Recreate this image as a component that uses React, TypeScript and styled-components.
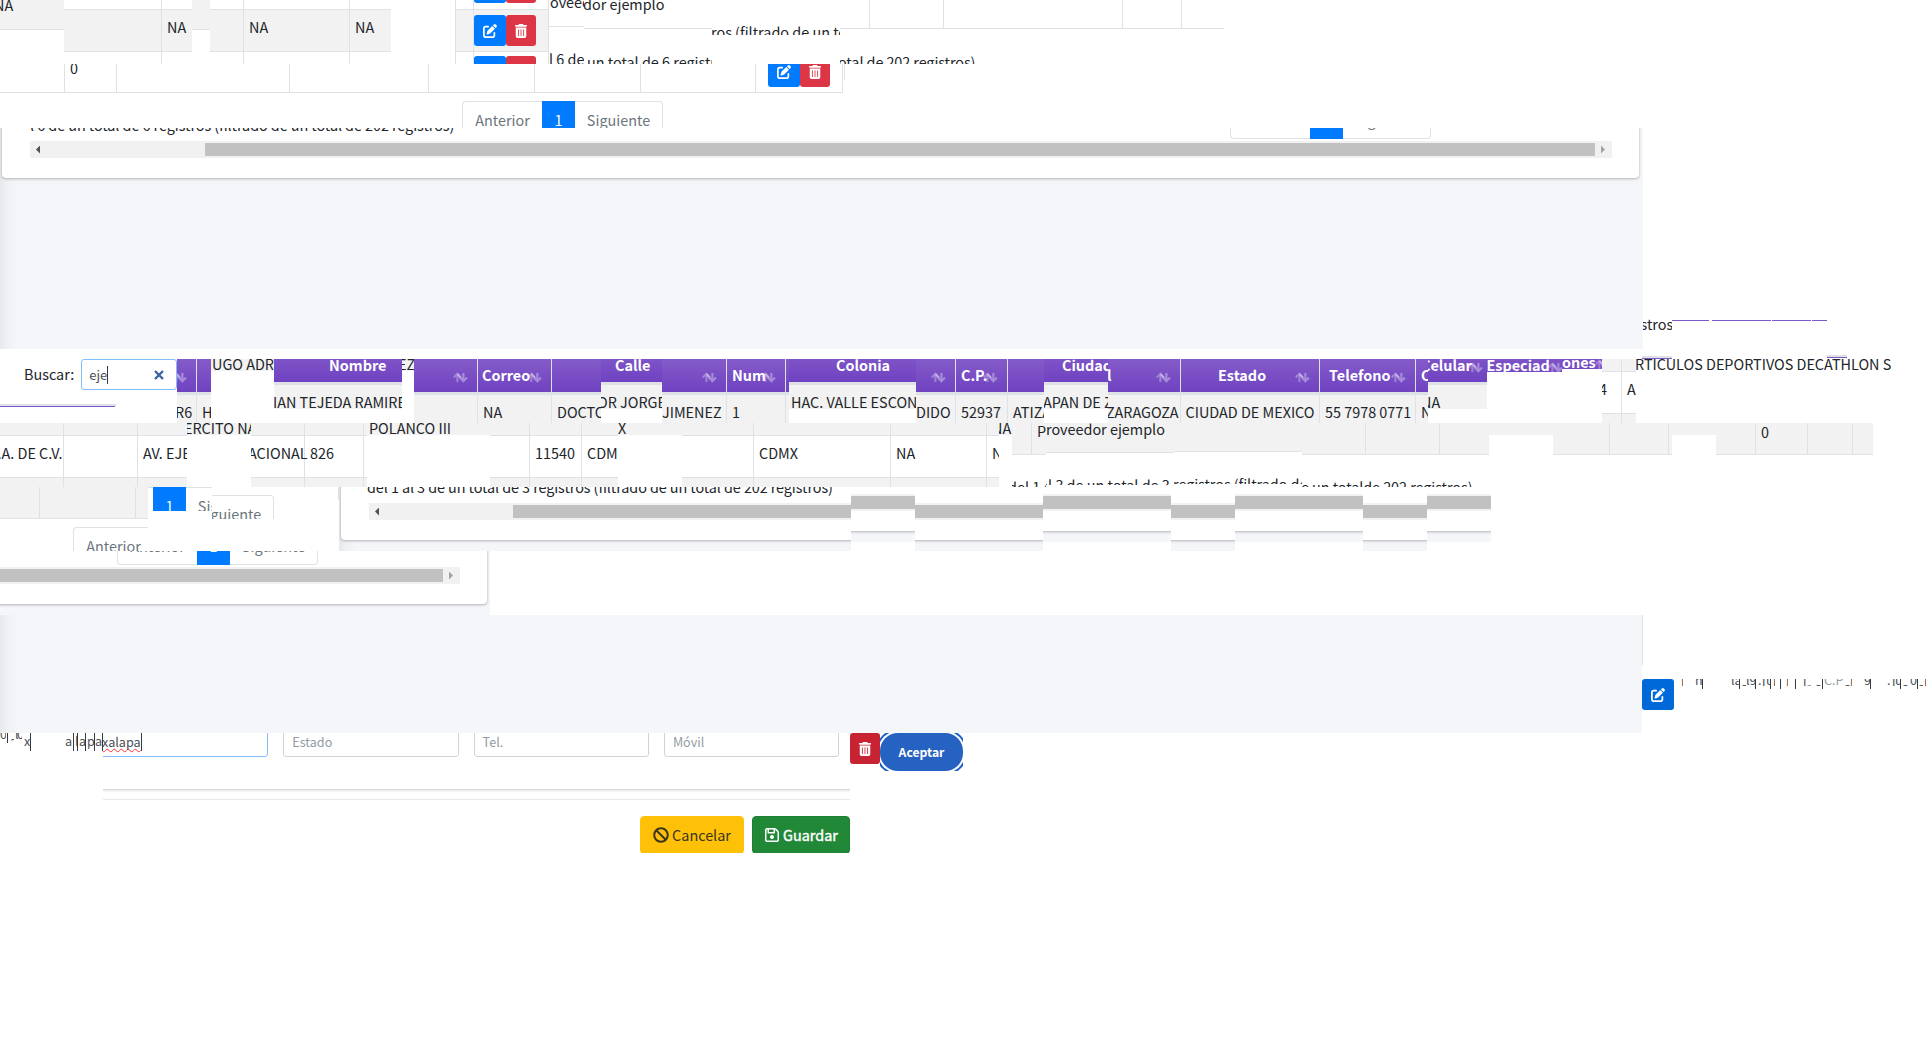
import React from "react";
import styled, { createGlobalStyle, css } from "styled-components";
import { FaBan } from "react-icons/fa";
import { FaPenToSquare, FaRegFloppyDisk, FaTrashCan } from "react-icons/fa6";

const LINE = "#dee2e6";
const STRIPE = "#f2f2f2";
const PURPLE = "#7f57c7";

const Global = createGlobalStyle`
  * { box-sizing: border-box; }
  body {
    margin: 0;
    background: #fff;
    color: #212529;
    overflow: hidden;
    font: 14.4px/20px "Noto Sans CJK SC", "Noto Sans", sans-serif;
  }
`;

const Page = styled.main`
  display: flex;
  flex-direction: column;
  width: 1930px;
  height: 1050px;
  overflow: hidden;
`;

const Band = styled.section<{ h: number }>`
  display: flex;
  flex: none;
  align-items: flex-start;
  height: ${(p) => p.h}px;
  overflow: hidden;
`;

const Tile = styled.div<{ w: number; h?: number; gap?: number; top?: number; bg?: string }>`
  display: flex;
  flex: none;
  flex-direction: column;
  align-items: flex-start;
  width: ${(p) => p.w}px;
  height: ${(p) => (p.h ? `${p.h}px` : "100%")};
  margin: ${(p) => p.top || 0}px 0 0 ${(p) => p.gap || 0}px;
  background: ${(p) => p.bg || "transparent"};
  overflow: hidden;
`;

const Row = styled.div<{ h: number; stripe?: boolean; line?: boolean }>`
  display: flex;
  flex: none;
  width: 100%;
  height: ${(p) => p.h}px;
  background: ${(p) => (p.stripe ? STRIPE : "transparent")};
  border-bottom: ${(p) => (p.line ? `1px solid ${LINE}` : "0")};
`;

const Cell = styled.div<{ w: number; open?: boolean }>`
  display: flex;
  flex: none;
  align-items: flex-start;
  width: ${(p) => p.w}px;
  border-right: ${(p) => (p.open ? "0" : `1px solid ${LINE}`)};
`;

const Txt = styled.span<{ x?: number; base: number; track?: number; tone?: string; small?: boolean }>`
  flex: none;
  margin: ${(p) => p.base - 16}px 0 0 ${(p) => p.x || 0}px;
  letter-spacing: ${(p) => p.track || 0}px;
  color: ${(p) => p.tone || "inherit"};
  font-size: ${(p) => (p.small ? "12.6px" : "14.4px")};
  line-height: 20px;
  white-space: pre;
`;

/* table header fragments */
const Slice = styled.div<{ lift: number }>`
  display: flex;
  flex: none;
  flex-direction: column;
  width: 100%;
  margin-top: ${(p) => -p.lift}px;
`;

const HeadRow = styled.div`
  display: flex;
  height: 33px;
  background: linear-gradient(#845bc9, #6f42c1);
`;

const Rule = styled.div`
  height: 3px;
  background: ${LINE};
`;

const Th = styled.div<{ w: number; open?: boolean }>`
  position: relative;
  display: flex;
  flex: none;
  align-items: flex-start;
  width: ${(p) => p.w}px;
  border-right: ${(p) => (p.open ? "0" : `1px solid ${LINE}`)};
  color: #fff;
  font-weight: 700;
`;

const SortMark = styled.svg<{ right: number }>`
  position: absolute;
  right: ${(p) => p.right}px;
  top: 13px;
  width: 15px;
  height: 11px;
  fill: none;
  stroke: #fff;
  stroke-width: 2.1;
`;

const Sort = ({ right = 8 }: { right?: number }) => (
  <SortMark right={right} viewBox="0 0 15 11">
    <path d="M.8 5.4 4.4 1.8 8 5.4M4.4 2v8" opacity=".3" />
    <path d="M6.8 5.6 10.4 9.2 14 5.6M10.4 9V1M4.4 1.8 10.4 9" opacity=".36" />
  </SortMark>
);

type Col = { w: number; head?: string; hx?: number; sort?: number | false; text?: string; x?: number; open?: boolean };

const HeadSlice = ({ w, cols, lift = 0, h = 64 }: { w: number; cols: Col[]; lift?: number; h?: number }) => (
  <Tile w={w} h={h}>
    <Slice lift={lift}>
      <HeadRow>
        {cols.map((c, i) => (
          <Th key={i} w={c.w} open={c.open}>
            {c.head && <Txt x={c.hx} base={22}>{c.head}</Txt>}
            {c.sort !== undefined && c.sort !== false && <Sort right={c.sort} />}
          </Th>
        ))}
      </HeadRow>
      <Rule />
      <Row h={28} stripe>
        {cols.map((c, i) => (
          <Cell key={i} w={c.w} open={c.open}>
            {c.text && <Txt x={c.x} base={23}>{c.text}</Txt>}
          </Cell>
        ))}
      </Row>
    </Slice>
  </Tile>
);

/* body fragment: tail of one row, a whole row, head of the next */
type BodyCol = { w: number; open?: boolean; text?: string; x?: number };
const BodySlice = ({ w, cols, first, mid, odd, base = 23 }: {
  w: number; cols: BodyCol[]; first: number; mid: number; odd: boolean; base?: number;
}) => (
  <Tile w={w}>
    {[first, mid, 64 - first - mid].map((h, r) => (
      <Row key={r} h={h} stripe={r === 1 ? !odd : odd} line={r < 2}>
        {cols.map((c, i) => (
          <Cell key={i} w={c.w} open={c.open}>
            {r === 1 && c.text && <Txt x={c.x} base={base}>{c.text}</Txt>}
          </Cell>
        ))}
      </Row>
    ))}
  </Tile>
);

const Scrap = ({ w, text, x = 0, h = 12, base = 11 }: { w: number; text?: string; x?: number; h?: number; base?: number }) => (
  <Tile w={w} h={h} bg={STRIPE}>
    {text && <Txt x={x} base={base}>{text}</Txt>}
  </Tile>
);

/* buttons */
const IconButton = styled.button<{ w: number; tone: string }>`
  display: flex;
  flex: none;
  align-items: center;
  justify-content: center;
  width: ${(p) => p.w}px;
  height: 31px;
  padding: 0;
  border: 0;
  border-radius: 3px;
  background: ${(p) => p.tone};
  color: #fff;
  font-size: 14px;
`;

const Actions = styled.div<{ x?: number; top: number }>`
  display: flex;
  flex: none;
  margin: ${(p) => p.top}px 0 0 ${(p) => p.x || 0}px;
`;

const EditDelete = ({ x, top }: { x?: number; top: number }) => (
  <Actions x={x} top={top}>
    <IconButton w={32} tone="#007bff"><FaPenToSquare /></IconButton>
    <IconButton w={30} tone="#dc3545"><FaTrashCan /></IconButton>
  </Actions>
);

const PagerBox = styled.div<{ x: number; top: number }>`
  display: flex;
  flex: none;
  width: 201px;
  height: 38px;
  margin: ${(p) => p.top}px 0 0 ${(p) => p.x}px;
`;

const PageLink = styled.div<{ w: number; edge?: "l" | "r"; on?: boolean }>`
  flex: none;
  width: ${(p) => p.w}px;
  height: 38px;
  padding-top: 8px;
  text-align: center;
  color: ${(p) => (p.on ? "#fff" : "#6c757d")};
  background: ${(p) => (p.on ? "#007bff" : "#fff")};
  border: 1px solid ${(p) => (p.on ? "#007bff" : LINE)};
  ${(p) => p.edge === "l" && css`border-right: 0; border-radius: 4px 0 0 4px;`}
  ${(p) => p.edge === "r" && css`border-left: 0; border-radius: 0 4px 4px 0;`}
`;

const Pager = ({ x, top }: { x: number; top: number }) => (
  <PagerBox x={x} top={top}>
    <PageLink w={80} edge="l">Anterior</PageLink>
    <PageLink w={33} on>1</PageLink>
    <PageLink w={88} edge="r">Siguiente</PageLink>
  </PagerBox>
);

/* card bottoms with a horizontal scrollbar */
const Card = styled.div<{ x: number; w: number; h: number; lift?: number }>`
  display: flex;
  flex: none;
  flex-direction: column;
  width: ${(p) => p.w}px;
  height: ${(p) => p.h + 10}px;
  margin: ${(p) => -10 - (p.lift || 0)}px 0 0 ${(p) => p.x}px;
  padding-top: 10px;
  background: #fff;
  border-radius: 4px;
  box-shadow: 0 0 1px rgba(0, 0, 0, 0.2), 0 1px 3px rgba(0, 0, 0, 0.25);
`;

const CardLine = styled.div<{ h: number }>`
  display: flex;
  flex: none;
  align-items: flex-start;
  height: ${(p) => p.h}px;
`;

/* status text column, wide enough for the pager to start after it */
const Status = styled.div<{ w: number }>`
  display: flex;
  flex: none;
  align-items: flex-start;
  width: ${(p) => p.w}px;
`;

const Track = styled.div<{ x: number; w: number }>`
  display: flex;
  flex: none;
  align-items: center;
  width: ${(p) => p.w}px;
  height: 17px;
  margin-left: ${(p) => p.x}px;
  background: #f1f1f1;
`;

const Thumb = styled.div`
  flex: 1;
  height: 13px;
  background: #c1c1c1;
`;

const Arrow = styled.i<{ dir: "l" | "r"; pad: number }>`
  flex: none;
  width: 4px;
  height: 8px;
  margin: 0 ${(p) => (p.dir === "l" ? p.pad : 7)}px 0 ${(p) => (p.dir === "l" ? 6 : p.pad)}px;
  background: ${(p) => (p.dir === "l" ? "#505050" : "#a3a3a3")};
  clip-path: ${(p) => (p.dir === "l" ? "polygon(100% 0, 100% 100%, 0 50%)" : "polygon(0 0, 100% 50%, 0 100%)")};
`;

const Ground = styled.div<{ w: number; h?: number; shade?: boolean }>`
  display: flex;
  flex: none;
  flex-direction: column;
  align-items: flex-start;
  width: ${(p) => p.w}px;
  height: ${(p) => (p.h ? `${p.h}px` : "100%")};
  overflow: hidden;
  background: ${(p) =>
    p.shade ? "linear-gradient(90deg, #e6e8ec, #eff1f4 7px, #f4f6f9 18px)" : "#f4f6f9"};
`;

const BarSlice = ({ w, up }: { w: number; up?: boolean }) => (
  <Ground w={w} h={up ? 55 : 64}>
    <Card x={-10} w={w + 20} h={53} lift={up ? 9 : 0}>
      <CardLine h={16} />
      <Track x={0} w={w + 20}><Thumb /></Track>
    </Card>
  </Ground>
);

const Stripe = styled.div<{ w: number; h?: number; tone: string; gap?: number; top?: number }>`
  flex: none;
  width: ${(p) => p.w}px;
  height: ${(p) => p.h || 1}px;
  margin: ${(p) => p.top || 0}px 0 0 ${(p) => p.gap || 0}px;
  background: ${(p) => p.tone};
`;

/* search field */
const SearchBox = styled.div`
  display: flex;
  flex: none;
  align-items: center;
  width: 96px;
  height: 31px;
  margin-left: 7px;
  padding: 0 12px 0 7px;
  border: 1px solid #80bdff;
  border-radius: 3px;
  color: #495057;
  font-size: 13px;
`;

const Caret = styled.i<{ h: number; gap?: number; top?: number }>`
  flex: none;
  width: 1px;
  height: ${(p) => p.h}px;
  margin: ${(p) => p.top || 0}px 0 0 ${(p) => p.gap || 0}px;
  background: #343a40;
`;

const Clear = styled.svg`
  width: 10px;
  height: 10px;
  margin-left: auto;
  fill: none;
  stroke: #3d62a3;
  stroke-width: 2.4;
`;

/* typed fragments */
const Bit = styled.div<{ w: number; gap: number; h: number }>`
  display: flex;
  flex: none;
  width: ${(p) => p.w}px;
  height: ${(p) => p.h}px;
  margin-left: ${(p) => p.gap}px;
  overflow: hidden;
`;

type Typed = { at: number; w?: number; text?: string; tone?: string; base?: number; caret?: boolean };
const Bits = ({ from, items, h, caretH, base }: { from: number; items: Typed[]; h: number; caretH: number; base: number }) => {
  let pos = from;
  return (
    <>
      {items.map((t, i) => {
        const gap = t.at - pos;
        const w = t.w || 1;
        pos = t.at + w;
        return t.caret ? (
          <Caret key={i} h={caretH} gap={gap} />
        ) : (
          <Bit key={i} w={w} gap={gap} h={h}>
            <Txt small base={t.base || base} tone={t.tone || "#495057"}>{t.text}</Txt>
          </Bit>
        );
      })}
    </>
  );
};

const c = (at: number): Typed => ({ at, caret: true });
const upperBits: Typed[] = [
  { at: 1681, w: 2, text: "l" }, { at: 1695, w: 7, text: "n", base: 7 }, c(1702),
  { at: 1731, w: 8, text: "la", base: 7 }, c(1739), { at: 1741, w: 5, text: "a", base: 14 }, { at: 1746, w: 9, text: "l9", base: 7 }, c(1755),
  { at: 1758, w: 3, text: ".", base: 7 }, { at: 1762, w: 4, text: "l" }, { at: 1766, w: 5, text: "u", base: 7 }, c(1770),
  { at: 1773, w: 2, text: "l" }, c(1780), { at: 1786, w: 2, text: "l" }, c(1795),
  { at: 1803, w: 3, text: "l" }, { at: 1806, w: 5, text: "a", base: 14, tone: "#939ba2" }, { at: 1815, w: 6, text: "a", base: 14 }, c(1822),
  { at: 1824, w: 19, text: "C.P.", base: 7, tone: "#939ba2" }, { at: 1844, w: 6, text: "a", base: 14 }, { at: 1850, w: 2, text: "l" },
  { at: 1864, w: 6, text: "9", base: 7 }, c(1870), { at: 1887, w: 3, text: ".", base: 7 }, { at: 1892, w: 4, text: "l" }, { at: 1895, w: 5, text: "u", base: 7 }, c(1900),
  { at: 1902, w: 6, text: "a", base: 14 }, { at: 1910, w: 7, text: "0", base: 7 }, c(1917), { at: 1918, w: 5, text: "a", base: 14 }, { at: 1924, w: 2, text: "l" },
];

/* form */
const Fields = styled.div`
  display: flex;
  flex: none;
  gap: 15px;
  margin: -7px 0 0 -10px;
`;

const Field = styled.div<{ focus?: boolean }>`
  display: flex;
  flex: none;
  align-items: flex-start;
  width: 175.3px;
  height: 31px;
  padding-left: 8px;
  border: 1px solid ${(p) => (p.focus ? "#80bdff" : "#ced4da")};
  border-radius: 3px;
`;

const Misspelt = styled.span`
  flex: none;
  margin-top: 5px;
  color: #495057;
  font-size: 12.6px;
  line-height: 20px;
  text-decoration: underline wavy #f33 1px;
  text-underline-offset: 1px;
  text-decoration-skip-ink: none;
`;

const Divider = styled.div<{ top: number; soft?: boolean }>`
  flex: none;
  width: 100%;
  height: 1px;
  margin-top: ${(p) => p.top}px;
  background: ${(p) => (p.soft ? "#e9eaeb" : "#d9d9d9")};
  box-shadow: ${(p) => (p.soft ? "none" : "0 1px 2px rgba(0, 0, 0, 0.15)")};
`;

const Footer = styled.div`
  display: flex;
  justify-content: flex-end;
  gap: 8px;
  width: 100%;
  margin-top: 16px;
`;

const Action = styled.button<{ w: number; tone: string; ink: string; edge: string; heavy?: boolean }>`
  display: flex;
  align-items: center;
  justify-content: center;
  gap: 3px;
  width: ${(p) => p.w}px;
  height: 38px;
  padding: 0;
  border: 1px solid ${(p) => p.edge};
  border-radius: 4px;
  background: ${(p) => p.tone};
  color: ${(p) => p.ink};
  font: 14.4px/20px "Noto Sans CJK SC", "Noto Sans", sans-serif;
  -webkit-text-stroke: ${(p) => (p.heavy ? "0.4px" : "0")};
  svg { font-size: 16px; }
`;

const Pill = styled.button`
  width: 83px;
  height: 38px;
  padding: 0;
  border: 0;
  border-radius: 18px;
  background: #2562c2;
  box-shadow: 0 0 0 2px #fff, 0 0 0 4px #1a5fd0;
  color: #fff;
  font: 700 12.2px/20px "Noto Sans CJK SC", "Noto Sans", sans-serif;
`;

const PLAIN = "#939ba2";

export default function App() {
  return (
    <Page>
      <Global />

      <Band h={64}>
        <Tile w={64}><Row h={30} stripe line><Txt x={-6} base={11}>NA</Txt></Row></Tile>
        <BodySlice w={128} first={10} mid={42} odd={false} base={23} cols={[{ w: 98 }, { w: 30, open: true, text: "NA", x: 5 }]} />
        <Tile w={18}><Row h={30} stripe line /></Tile>
        <BodySlice w={181} first={10} mid={42} odd={false} base={23}
          cols={[{ w: 34 }, { w: 106, text: "NA", x: 5 }, { w: 41, open: true, text: "NA", x: 5 }]} />
        <Tile w={94} gap={64}>
          <Row h={10} line><Cell w={1} /><Cell w={18} /><Cell w={75}><EditDelete top={-28} /></Cell></Row>
          <Row h={42} stripe line><Cell w={1} /><Cell w={18} /><Cell w={75}><EditDelete top={5} /></Cell></Row>
          <Row h={12}><Cell w={1} /><Cell w={18} /><Cell w={75}><EditDelete top={4} /></Cell></Row>
        </Tile>
        <Tile w={35}>
          <Row h={27} line><Txt x={1} base={8}>oveed</Txt></Row>
          <Txt base={38}>l 6 de un</Txt>
        </Tile>
        <Tile w={128}>
          <Row h={29} line><Txt x={-1} base={10}>dor ejemplo</Txt></Row>
          <Txt x={3} base={39}>un total de 6 registros</Txt>
        </Tile>
        <Tile w={128} h={35}><Txt x={-1} base={38}>ros (filtrado de un total</Txt></Tile>
        <Tile w={384}>
          <Row h={29} line><Cell w={30} /><Cell w={74} /><Cell w={179} /><Cell w={59} /></Row>
          <Txt x={-2} base={39} track={-0.08}>otal de 202 registros)</Txt>
        </Tile>
      </Band>

      <Band h={64}>
        <Tile w={843}>
          <Row h={29} line>
            <Cell w={65} /><Cell w={52}><Txt x={5} base={10}>0</Txt></Cell><Cell w={173} /><Cell w={139} />
            <Cell w={106} /><Cell w={106} /><Cell w={115} /><Cell w={87}><EditDelete x={12} top={-8} /></Cell>
          </Row>
          <Pager x={462} top={8} />
        </Tile>
        <Stripe w={1} h={16} gap={1} tone={LINE} />
      </Band>

      <Band h={221}>
        <Ground w={1642.5} shade>
          <Card x={2} w={1637} h={50}>
            <CardLine h={13}>
              <Status w={1228}>
                <Txt x={28} base={3} track={-0.06}>l 6 de un total de 6 registros (filtrado de un total de 202 registros)</Txt>
              </Status>
              <Pager x={0} top={-27} />
            </CardLine>
            <Track x={28} w={1582}>
              <Arrow dir="l" pad={165} /><Thumb /><Arrow dir="r" pad={6} />
            </Track>
          </Card>
        </Ground>
        <Tile w={29.5} h={221}><Txt x={-2} base={202}>stros</Txt></Tile>
        <Stripe w={37} gap={0} top={192} tone={PURPLE} />
        <Stripe w={59} gap={3} top={192} tone={PURPLE} />
        <Stripe w={39} gap={1} top={192} tone={PURPLE} />
        <Stripe w={15} gap={1} top={192} tone={PURPLE} />
      </Band>

      <Band h={10}>
        <Tile w={30} h={3} gap={1642} top={7}><Stripe w={30} h={2} tone={LINE} /><Stripe w={30} tone={PURPLE} /></Tile>
        <Tile w={20} h={3} gap={155} top={6}><Stripe w={20} h={2} tone={LINE} /><Stripe w={20} tone={PURPLE} /></Tile>
      </Band>

      <Band h={64}>
        <Tile w={177}>
          <CardLine h={45}>
            <Txt x={24} base={21}>Buscar:</Txt>
            <SearchBox>
              eje<Caret h={18} />
              <Clear viewBox="0 0 10 10"><path d="M1 1l8 8M9 1 1 9" /></Clear>
            </SearchBox>
          </CardLine>
          <Stripe w={116} h={2} tone={LINE} />
          <Stripe w={115} tone={PURPLE} />
        </Tile>
        <HeadSlice w={34} cols={[{ w: 20, sort: 9, text: "R6", x: -2 }, { w: 14, open: true, text: "H", x: 5 }]} />
        <Scrap w={63} text="UGO ADR" x={1} />
        <HeadSlice w={128} lift={10} h={50} cols={[{ w: 128, open: true, head: "Nombre", hx: 55, text: "IAN TEJEDA RAMIREZ", x: -1 }]} />
        <Scrap w={12} text="EZ" x={-4} />
        <HeadSlice w={187} cols={[
          { w: 64, sort: 9 }, { w: 74, head: "Correo", hx: 4, sort: 9, text: "NA", x: 5 }, { w: 49, open: true, text: "DOCTOR", x: 5 },
        ]} />
        <HeadSlice w={61} lift={10} h={50} cols={[{ w: 61, open: true, head: "Calle", hx: 14, text: "OR JORGE", x: -4 }]} />
        <HeadSlice w={127} cols={[
          { w: 65, sort: 9, text: "JIMENEZ", x: 0 }, { w: 59, head: "Num", hx: 5, sort: 9, text: "1", x: 5 }, { w: 3, open: true },
        ]} />
        <HeadSlice w={127} lift={10} h={50} cols={[{ w: 127, open: true, head: "Colonia", hx: 47, text: "HAC. VALLE ESCON", x: 2 }]} />
        <HeadSlice w={128} cols={[
          { w: 40, sort: 9, text: "DIDO", x: 0 }, { w: 52, head: "C.P.", hx: 5, sort: 9, text: "52937", x: 5 }, { w: 36, open: true, text: "ATIZA", x: 5 },
        ]} />
        <HeadSlice w={64} lift={10} h={50} cols={[{ w: 64, open: true, head: "Ciudad", hx: 18, text: "APAN DE ZA", x: -1 }]} />
        <HeadSlice w={320} cols={[
          { w: 73, head: "l", hx: -1, sort: 9, text: "ZARAGOZA", x: -2 }, { w: 139, head: "Estado", hx: 37, sort: 9, text: "CIUDAD DE MEXICO", x: 4.5 },
          { w: 96, head: "Telefono", hx: 9, sort: 9, text: "55 7978 0771", x: 5 }, { w: 12, open: true, head: "C", hx: 5, text: "N", x: 5 },
        ]} />
        <HeadSlice w={59} lift={10} h={50} cols={[{ w: 59, open: true, head: "Celular", hx: -7, sort: 4, text: "NA", x: -7 }]} />
        <HeadSlice w={75} lift={10} h={13} cols={[{ w: 75, open: true, head: "Especiad", hx: -0.5, sort: -1 }]} />
        <HeadSlice w={40} lift={13} h={10} cols={[{ w: 40, open: true, head: "ones", hx: 0, sort: -8 }]} />
        <BodySlice w={34} first={13} mid={42} odd cols={[{ w: 20, text: "4", x: -3 }, { w: 14, open: true, text: "A", x: 5 }]} />
        <Tile w={256}><Txt x={-1} base={11}>RTICULOS DEPORTIVOS DECATHLON S.</Txt></Tile>
      </Band>

      <Band h={64}>
        <BodySlice w={187} first={13} mid={42} odd cols={[
          { w: 64, text: ".A. DE C.V.", x: -2.5 }, { w: 74 }, { w: 49, open: true, text: "AV. EJE", x: 5 },
        ]} />
        <Scrap w={64} text="ERCITO NA" x={-3} />
        <BodySlice w={116} first={13} mid={42} odd cols={[
          { w: 54, text: "ACIONAL", x: -3 }, { w: 59, text: "826", x: 5 }, { w: 3, open: true },
        ]} />
        <Scrap w={123} text="POLANCO III" x={2} />
        <BodySlice w={128} first={13} mid={42} odd cols={[
          { w: 40 }, { w: 52, text: "11540", x: 5 }, { w: 36, open: true, text: "CDM", x: 5 },
        ]} />
        <Scrap w={64} text="X" />
        <BodySlice w={317} first={13} mid={42} odd cols={[
          { w: 72 }, { w: 137, text: "CDMX", x: 5 }, { w: 96, text: "NA", x: 5 }, { w: 12, open: true, text: "N", x: 5 },
        ]} />
        <Scrap w={13} text="NA" x={-7} />
        <Tile w={34}>
          <Row h={32} stripe line><Cell w={20} /><Txt x={5} base={14}>P</Txt></Row>
          <Txt x={-4} base={38}>del 1 al</Txt>
        </Tile>
        <Tile w={128} h={62}>
          <Row h={30} stripe line><Txt x={0} base={12}>roveedor ejemplo</Txt></Row>
          <Txt x={-6} base={38}>al 3 de un total de 3 r</Txt>
        </Tile>
        <Tile w={128} h={61}>
          <Row h={29} stripe line />
          <Txt base={38} x={-1} track={-0.05}>registros (filtrado de</Txt>
        </Tile>
        <Tile w={187}>
          <Row h={32} stripe line><Cell w={64} /><Cell w={74} /></Row>
          <Txt base={38} x={-1} track={-0.06}>e un totalde 202 registros)</Txt>
        </Tile>
        <Scrap w={64} />
        <Tile w={119}><Row h={32} stripe line><Cell w={57} /><Cell w={59} /></Row></Tile>
        <Scrap w={44} />
        <Tile w={157}>
          <Row h={32} stripe line><Cell w={40} /><Cell w={52}><Txt x={5} base={15}>0</Txt></Cell><Cell w={45} /></Row>
        </Tile>
      </Band>

      <Band h={64}>
        <Tile w={148}>
          <Row h={32} stripe line><Cell w={40} /><Cell w={96} /></Row>
          <Pager x={73} top={8} />
        </Tile>
        <Tile w={64} h={24}><Pager x={-75} top={0} /></Tile>
        <Tile w={62} h={32}><Pager x={-139} top={8} /></Tile>
        <Tile w={65}><Stripe w={1} h={13} gap={64} tone={LINE} /></Tile>
        <Ground w={512} shade>
          <Card x={2} w={600} h={53}>
            <CardLine h={16}>
              <Txt x={26} base={6} track={-0.08}>del 1 al 3 de un total de 3 registros (filtrado de un total de 202 registros)</Txt>
            </CardLine>
            <Track x={28} w={572}><Arrow dir="l" pad={134} /><Thumb /></Track>
          </Card>
        </Ground>
        <BarSlice w={64} up /><BarSlice w={128} /><BarSlice w={128} up /><BarSlice w={64} />
        <BarSlice w={128} up /><BarSlice w={64} /><BarSlice w={64} up />
      </Band>

      <Band h={64}>
        <Ground w={490}>
          <Card x={-10} w={497} h={53}>
            <CardLine h={16}><Pager x={127} top={-24} /></CardLine>
            <Track x={0} w={470}><Thumb /><Arrow dir="r" pad={6} /></Track>
          </Card>
        </Ground>
      </Band>

      <Band h={118}>
        <Ground w={1642} shade />
        <Stripe w={1} h={50} tone={LINE} />
        <Tile w={32} h={31} gap={-1} top={64}><IconButton w={32} tone="#0069d9"><FaPenToSquare /></IconButton></Tile>
        <Tile w={256} h={11} top={64}>
          <CardLine h={11}><Bits from={1674} items={upperBits} h={7} caretH={10} base={9} /></CardLine>
        </Tile>
      </Band>

      <Band h={120}>
        <Tile w={103} h={18}>
          <CardLine h={18}>
            <Bits from={0} h={8} caretH={10} base={7} items={[
              { at: 0, w: 6, text: "0" }, c(7), { at: 10, w: 4, text: "a", base: 14 }, { at: 15, w: 3, text: "l" }, { at: 17, w: 5, text: "0" },
            ]} />
            <Bits from={22} h={18} caretH={18} base={14} items={[
              { at: 24, w: 6, text: "x" }, c(30), { at: 65, w: 7, text: "a" }, c(73), { at: 75, w: 2, text: "l" }, c(77),
              { at: 79, w: 6, text: "a" }, c(85), { at: 87, w: 7, text: "p" }, c(94), { at: 95, w: 7, text: "a" }, c(102),
            ]} />
          </CardLine>
        </Tile>
        <Tile w={747}>
          <Fields>
            <Field focus><Misspelt>xalapa</Misspelt><Caret h={18} top={6} /></Field>
            <Field><Txt small base={21} tone={PLAIN}>Estado</Txt></Field>
            <Field><Txt small base={21} tone={PLAIN}>Tel.</Txt></Field>
            <Field><Txt small base={21} tone={PLAIN}>Móvil</Txt></Field>
          </Fields>
          <Divider top={32} />
          <Divider top={9} soft />
          <Footer>
            <Action w={104} tone="#ffc107" edge="#ffc107" ink="#3a3420"><FaBan />Cancelar</Action>
            <Action w={98} tone="#218838" edge="#1e7e34" ink="#fff" heavy><FaRegFloppyDisk />Guardar</Action>
          </Footer>
        </Tile>
        <IconButton w={30} tone="#c82333"><FaTrashCan /></IconButton>
        <Tile w={83} h={38}><Pill>Aceptar</Pill></Tile>
      </Band>
    </Page>
  );
}
